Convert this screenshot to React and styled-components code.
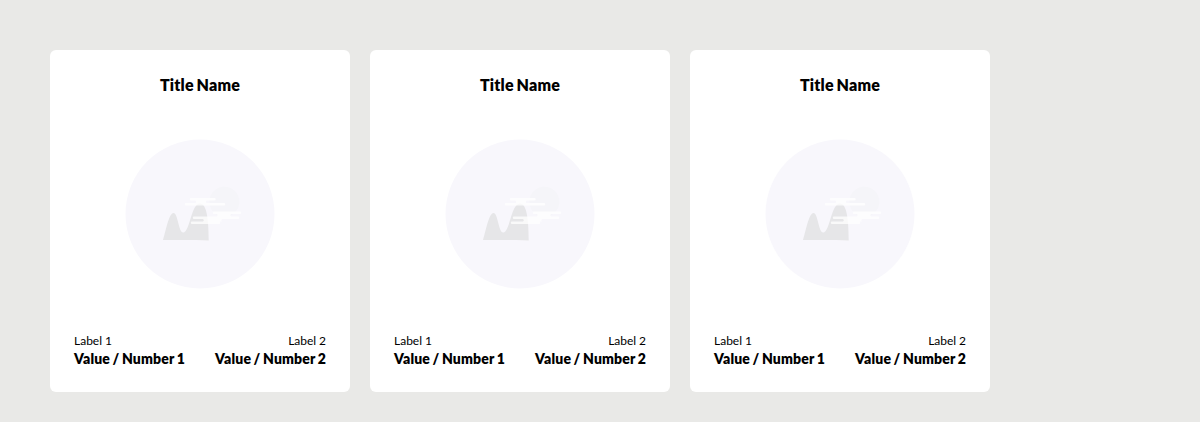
import React from "react";
import styled, { createGlobalStyle } from "styled-components";

const GlobalStyle = createGlobalStyle`
  * { box-sizing: border-box; }
  body {
    margin: 0;
    background: #e9e9e7;
    color: #000;
    font-family: Lato, "Liberation Sans", sans-serif;
  }
`;

const CardList = styled.main`
  display: flex;
  gap: 20px;
  height: 422px;
  padding: 50px 50px 30px;
`;

const Card = styled.article`
  display: flex;
  flex-direction: column;
  align-items: center;
  width: 300px;
  height: 342px;
  padding: 24px;
  border-radius: 6px;
  background: #fff;
`;

const Title = styled.h2`
  margin: 0;
  font-size: 16px;
  font-weight: 800;
  line-height: 22px;
  letter-spacing: 0.2px;
  word-spacing: -1.2px;
`;

const Picture = styled.svg`
  display: block;
  width: 150px;
  height: 150px;
  margin: 43px 0;
`;

const Details = styled.dl`
  display: flex;
  justify-content: space-between;
  width: 100%;
  margin: 0;
`;

const Detail = styled.div`
  text-align: ${({ $align }) => $align};
`;

const Label = styled.dt`
  font-size: 12px;
  line-height: 17px;
  word-spacing: -0.2px;
`;

const Value = styled.dd`
  margin: 0;
  font-size: 14px;
  font-weight: 800;
  line-height: 19px;
  letter-spacing: 0.16px;
  word-spacing: -0.9px;
`;

function Landscape() {
  return (
    <Picture viewBox="0 0 150 150" aria-hidden="true">
      <circle cx="75" cy="75" r="74.5" fill="#f8f7fc" />
      <circle cx="99.4" cy="62.7" r="15" fill="#f5f5f9" />
      <path
        d="M38 101C41 91 44 74 48.5 74C53 74 53.5 93.5 58.2 93.5C65 93.5 66 64.5 75 64.5C82 64.5 83.7 82 83.7 101.5L71 101Z"
        fill="#e6e6e8"
      />
      <g fill="#fff" fillOpacity="0.75">
        <path d="M66 58.9H89.5a1.25 1.25 0 0 1 0 2.5H81.5q-1.2 1.25 0 2.5H99a1.25 1.25 0 0 1 0 2.5H61a1.25 1.25 0 0 1 0-2.5H70.5q1.2-1.25 0-2.5H66a1.25 1.25 0 0 1 0-2.5Z" />
        <path d="M89 72.4H115a1.25 1.25 0 0 1 0 2.5H106q-1.2 1.25 0 2.5H113a1.25 1.25 0 0 1 0 2.5H97q-1.5 1.3 0 2.6H94a1.25 1.25 0 0 1 0 2.5H67a1.25 1.25 0 0 1 0-2.5H78q1.8-1.3 0-2.6H69a1.25 1.25 0 0 1 0-2.5H92q1.2-1.25 0-2.5H89a1.25 1.25 0 0 1 0-2.5Z" />
      </g>
    </Picture>
  );
}

function InfoCard() {
  return (
    <Card>
      <Title>Title Name</Title>
      <Landscape />
      <Details>
        <Detail $align="left">
          <Label>Label 1</Label>
          <Value>Value / Number 1</Value>
        </Detail>
        <Detail $align="right">
          <Label>Label 2</Label>
          <Value>Value / Number 2</Value>
        </Detail>
      </Details>
    </Card>
  );
}

export default function App() {
  return (
    <>
      <GlobalStyle />
      <CardList>
        <InfoCard />
        <InfoCard />
        <InfoCard />
      </CardList>
    </>
  );
}
